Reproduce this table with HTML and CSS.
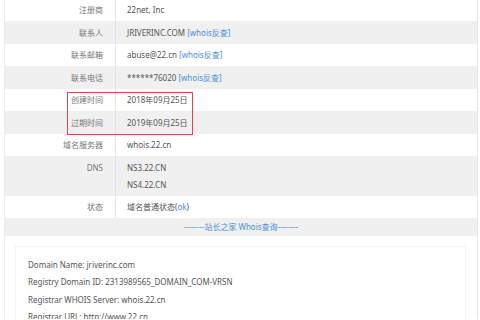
FILE: index.html
```html
<!DOCTYPE html>
<html>
<head>
<meta charset="utf-8">
<link rel="stylesheet" href="styles.css">
</head>
<body>
<div class="page">
  <div class="rows">
    <div class="row first"><div class="label">注册商</div><div class="value">22net, Inc</div></div>
    <div class="row alt"><div class="label">联系人</div><div class="value">JRIVERINC.COM <a class="link">[whois反查]</a></div></div>
    <div class="row"><div class="label">联系邮箱</div><div class="value">abuse@22.cn <a class="link">[whois反查]</a></div></div>
    <div class="row alt"><div class="label">联系电话</div><div class="value">******76020 <a class="link">[whois反查]</a></div></div>
    <div class="row"><div class="label">创建时间</div><div class="value">2018年09月25日</div></div>
    <div class="row alt"><div class="label">过期时间</div><div class="value">2019年09月25日</div></div>
    <div class="row"><div class="label">域名服务器</div><div class="value">whois.22.cn</div></div>
    <div class="row alt"><div class="label">DNS</div><div class="value">NS3.22.CN<br>NS4.22.CN</div></div>
    <div class="row"><div class="label">状态</div><div class="value">域名普通状态(<a class="link">ok</a>)</div></div>
    <div class="highlight"></div>
  </div>
  <div class="divider">--------站长之家 Whois查询--------</div>
  <div class="raw">
    <p>Domain Name: jriverinc.com</p>
    <p>Registry Domain ID: 2313989565_DOMAIN_COM-VRSN</p>
    <p>Registrar WHOIS Server: whois.22.cn</p>
    <p>Registrar URL: http://www.22.cn</p>
  </div>
</div>
</body>
</html>
```
FILE: styles.css
```css
html, body {
  margin: 0;
  padding: 0;
  background: #fff;
  overflow: hidden;
}
body {
  font-family: "Noto Sans", "Noto Sans CJK SC", sans-serif;
  font-size: 8px;
  color: #555;
}
.page {
  margin: 0 4px;
  width: 472px;
  border-left: 1px solid #ececec;
  border-right: 1px solid #e6e6e6;
  height: 320px;
}
.rows {
  position: relative;
}
.row {
  display: flex;
  line-height: 17px;
}
.row.first {
  margin-top: -1.5px;
}
.row.alt {
  background: #f0f0f0;
}
.label {
  width: 98px;
  flex: none;
  text-align: right;
  padding: 2.75px 12px 2.75px 0;
  border-right: 1px solid #e4e4e4;
  color: #777;
}
.value {
  padding: 2.75px 0 2.75px 11px;
  color: #555;
}
.link {
  color: #4a8fd6;
  text-decoration: none;
}
.highlight {
  position: absolute;
  left: 62px;
  top: 93.5px;
  width: 124px;
  height: 41px;
  border: 1.5px solid #e0464b;
}
.divider {
  background: #f0f0f0;
  text-align: center;
  color: #4a8fd6;
  line-height: 18px;
  height: 18px;
}
.raw {
  margin: 10px 11px 0 10px;
  border: 1px solid #f3f3f3;
  padding: 9px 12px 0;
}
.raw p {
  margin: 0;
  line-height: 17.3px;
  color: #555;
}
```
